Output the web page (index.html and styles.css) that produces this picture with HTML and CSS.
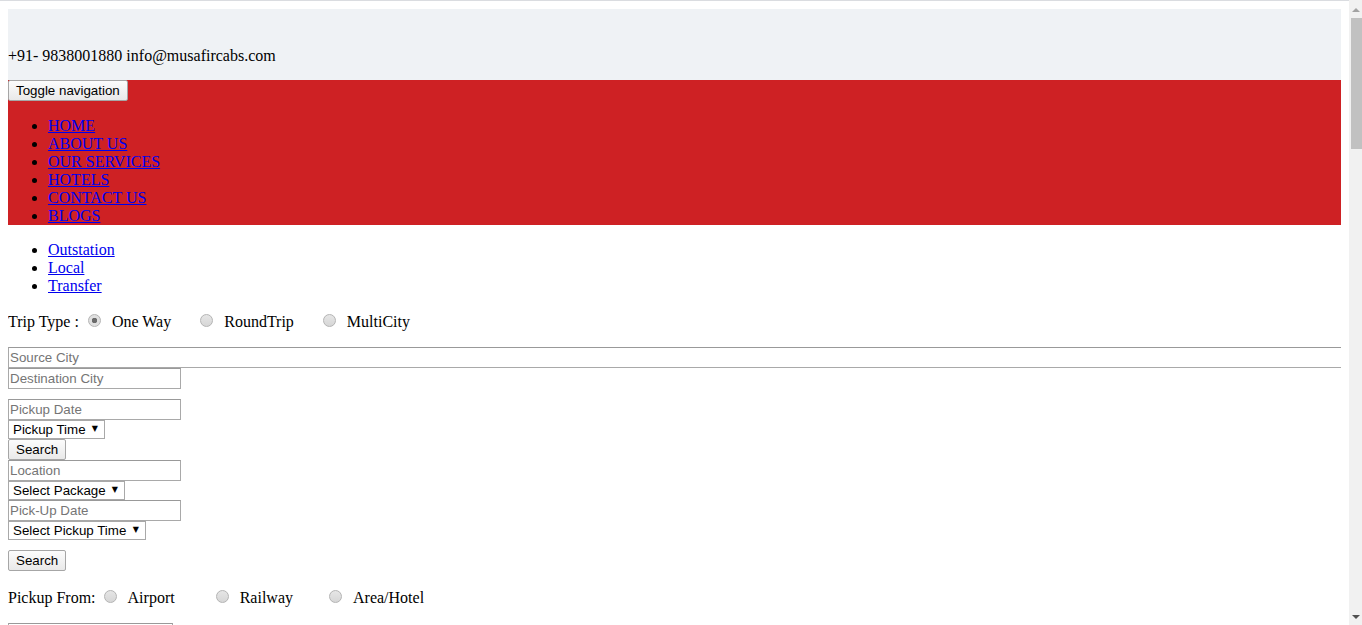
FILE: index.html
```html
<!DOCTYPE html>
<html lang="en">
<head>
    <meta charset="UTF-8">
    <meta name="viewport" content="width=device-width, initial-scale=1.0">
    <title>Musafir Cabs</title>
    <link rel="stylesheet" href="styles.css">
</head>
<body>
    <!-- Top contact bar -->
    <div class="top-bar">
        <div class="contact">+91- 9838001880 info@musafircabs.com</div>
    </div>

    <!-- Main navigation -->
    <nav class="main-nav">
        <button class="btn" type="button">Toggle navigation</button>
        <ul>
            <li><a href="#">HOME</a></li>
            <li><a href="#">ABOUT US</a></li>
            <li><a href="#">OUR SERVICES</a></li>
            <li><a href="#">HOTELS</a></li>
            <li><a href="#">CONTACT US</a></li>
            <li><a href="#">BLOGS</a></li>
        </ul>
    </nav>

    <!-- Booking tabs -->
    <ul class="tabs">
        <li><a href="#">Outstation</a></li>
        <li><a href="#">Local</a></li>
        <li><a href="#">Transfer</a></li>
    </ul>

    <!-- Outstation form -->
    <p class="radio-row">Trip Type :<input class="radio" type="radio" name="trip" checked><span class="opt opt-wide">One Way</span><input class="radio" type="radio" name="trip"><span class="opt opt-wide">RoundTrip</span><input class="radio" type="radio" name="trip"><span class="opt">MultiCity</span></p>

    <input class="field field-full" type="text" placeholder="Source City">
    <input class="field" type="text" placeholder="Destination City">
    <div class="group">
        <input class="field" type="text" placeholder="Pickup Date">
        <div class="select-box"><select><option>Pickup Time</option></select></div>
        <button class="btn" type="button">Search</button>
    </div>

    <!-- Local form -->
    <input class="field" type="text" placeholder="Location">
    <div class="select-box"><select><option>Select Package</option></select></div>
    <input class="field" type="text" placeholder="Pick-Up Date">
    <div class="select-box"><select><option>Select Pickup Time</option></select></div>
    <div class="group">
        <button class="btn" type="button">Search</button>
    </div>

    <!-- Transfer form -->
    <p class="radio-row">Pickup From:<input class="radio radio-tight" type="radio" name="from"><span class="opt opt-airport">Airport</span><input class="radio" type="radio" name="from"><span class="opt opt-railway">Railway</span><input class="radio" type="radio" name="from"><span class="opt">Area/Hotel</span></p>

    <input class="field field-wide" type="text" placeholder="Pickup Location">
    <input class="field" type="text" placeholder="Drop Location">
    <input class="field" type="text" placeholder="Pickup Date">
    <div class="select-box"><select><option>Pickup Time</option></select></div>
    <div class="group">
        <button class="btn" type="button">Search</button>
    </div>

    <h2>Welcome to Musafir Cabs</h2>
    <p>Musafir Cabs offers outstation, local and airport transfer taxi services at affordable rates.</p>
    <p>Book a cab online and travel comfortably with our experienced drivers.</p>

    <h2>Our Services</h2>
    <ul>
        <li>Outstation Taxi</li>
        <li>Local Taxi</li>
        <li>Airport Transfer</li>
        <li>Railway Station Transfer</li>
        <li>Hotel Booking</li>
    </ul>

    <h2>Popular Routes</h2>
    <ul>
        <li><a href="#">Lucknow to Delhi</a></li>
        <li><a href="#">Lucknow to Agra</a></li>
        <li><a href="#">Lucknow to Varanasi</a></li>
        <li><a href="#">Lucknow to Kanpur</a></li>
        <li><a href="#">Lucknow to Allahabad</a></li>
        <li><a href="#">Lucknow to Ayodhya</a></li>
        <li><a href="#">Lucknow to Nainital</a></li>
        <li><a href="#">Lucknow to Gorakhpur</a></li>
    </ul>

    <div class="spacer"></div>

    <footer>
        <p>+91- 9838001880 info@musafircabs.com</p>
        <p>Copyright &copy; Musafir Cabs. All rights reserved.</p>
    </footer>

    <!-- Window scrollbar as it shows in the screenshot -->
    <div class="scrollbar">
        <span class="arrow arrow-up"></span>
        <span class="thumb"></span>
        <span class="arrow arrow-down"></span>
    </div>
</body>
</html>
```

FILE: styles.css
```css
/* Page basics: plain browser look with a Times-like font */
html {
    border-top: 1px solid #dadce0;
}

body {
    margin: 8px 21px 8px 8px; /* room for the scrollbar on the right */
    font-family: "Liberation Serif", "Times New Roman", serif;
    font-size: 16px;
    line-height: 18px;
    color: #000;
}

a {
    color: #0000ee;
}

/* Contact bar */
.top-bar {
    background-color: #eff2f5;
    padding: 38px 0 15px;
}

/* Red navigation bar */
.main-nav {
    background-color: #ce2124;
}

.main-nav ul {
    margin: 16px 0;
    padding-left: 40px;
}

.tabs {
    margin: 16px 0;
    padding-left: 40px;
}

/* Form controls in the old grey style */
.btn {
    display: block;
    height: 21px;
    margin: 0;
    padding: 1px 7px;
    font-family: "Liberation Sans", Arial, sans-serif;
    font-size: 13.33px;
    color: #000;
    background: linear-gradient(#fcfcfc, #e9e9e9);
    border: 1px solid #a6a6a6;
    border-radius: 2px;
}

.field {
    display: block;
    box-sizing: border-box;
    width: 173px;
    height: 21px;
    margin: 0;
    padding: 1px 1px;
    font-family: "Liberation Sans", Arial, sans-serif;
    font-size: 13.33px;
    border: 1px solid #a9a9a9;
    border-top-color: #999;
}

.field::placeholder {
    color: #757575;
}

.field-full {
    width: calc(100% + 4px);
}

.field-wide {
    width: 165px;
}

.group {
    margin-top: 10px;
}

.select-box {
    position: relative;
    width: fit-content;
}

.select-box select {
    display: block;
    height: 19px;
    margin: 0;
    padding: 0 18px 0 4px;
    font-family: "Liberation Sans", Arial, sans-serif;
    font-size: 13.33px;
    color: #000;
    background: #fff;
    border: 1px solid #a9a9a9;
    border-radius: 0;
    appearance: none;
    -webkit-appearance: none;
}

/* Little arrow drawn over the select */
.select-box::after {
    content: "\25BC";
    position: absolute;
    top: 5px;
    right: 7px;
    font-family: "DejaVu Sans", sans-serif;
    font-size: 8px;
    line-height: 8px;
    pointer-events: none;
}

/* Radio rows */
.radio-row {
    margin: 16px 0;
    line-height: 18px;
}

.radio {
    appearance: none;
    -webkit-appearance: none;
    width: 13px;
    height: 13px;
    margin: 3px 11px 0 9px;
    vertical-align: baseline;
    border: 1px solid #b4b4b4;
    border-radius: 50%;
    background: linear-gradient(#e6e6e6, #d6d6d6);
    box-sizing: border-box;
}

.radio:checked {
    background: radial-gradient(circle, #6b6b6b 0 2.5px, #e0e0e0 3px);
}

.radio-tight {
    margin-left: 8px;
}

.opt-wide {
    margin-right: 20px;
}

.opt-airport {
    margin-right: 32px;
}

.opt-railway {
    margin-right: 27px;
}

.spacer {
    height: 1400px;
}

/* Fake window scrollbar */
.scrollbar {
    position: fixed;
    top: 0;
    right: 0;
    bottom: 0;
    width: 13px;
    background-color: #f1f1f1;
    display: flex;
    flex-direction: column;
    align-items: center;
}

.thumb {
    align-self: stretch;
    height: 131px;
    margin: 6px 0 0 2px;
    background-color: #c1c1c1;
}

.arrow {
    width: 0;
    height: 0;
    border-left: 4px solid transparent;
    border-right: 4px solid transparent;
}

.arrow-up {
    margin-top: 8px;
    border-bottom: 4px solid #a3a3a3;
}

.arrow-down {
    margin-top: auto;
    margin-bottom: 6px;
    border-top: 4px solid #505050;
}
```
